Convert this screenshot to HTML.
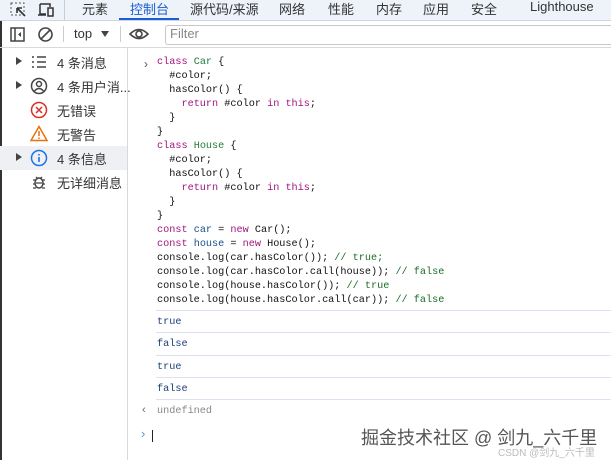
<!DOCTYPE html><html><head><meta charset="utf-8"><style>
body{margin:0;width:611px;height:460px;overflow:hidden;background:#fff;font-family:"Liberation Sans","Noto Sans CJK SC",sans-serif;position:relative}
.a{position:absolute}
.tabs{left:0;top:0;width:611px;height:20px;background:#eef2f9;border-bottom:1px solid #d0d4dc;font-size:13px;color:#333}
.tabs span{position:absolute;top:-1px}
.tb{left:0;top:21px;width:611px;height:26px;border-bottom:1px solid #d6d9e0;font-size:13px;color:#333}
.side{left:0;top:48px;width:127px;height:412px;border-right:1px solid #d6d9e0}
.row{position:absolute;left:0;width:127px;height:24px;font-size:13px;color:#333}
.row .t{position:absolute;left:57px;top:3px;white-space:nowrap}
.row .ar{position:absolute;left:16px;top:7px;width:0;height:0;border-left:6px solid #444;border-top:4px solid transparent;border-bottom:4px solid transparent}
.code{left:157px;top:56px;font-family:"Liberation Mono",monospace;font-size:10.2px;line-height:14px;white-space:pre;color:#111}
.k{color:#a0157f}.c{color:#1a6e2a}.v{color:#1a4f8a}.g{color:#237a3c}
.out{position:absolute;left:157px;font-family:"Liberation Mono",monospace;font-size:10.2px;color:#1a3f7a}
.sep{position:absolute;left:156px;width:455px;height:1px;background:#dde0f0}
</style></head><body>
<div class="a" style="left:0;top:0;width:2px;height:460px;background:#333"></div>
<div class="a tabs">
<svg class="a" style="left:10px;top:2px" width="18" height="16"><rect x="1" y="1" width="13" height="12" fill="none" stroke="#555" stroke-dasharray="2 2"/><path d="M7 6l8 8M7 6h5M7 6v5" stroke="#333" stroke-width="1.6" fill="none"/></svg>
<svg class="a" style="left:37px;top:2px" width="18" height="16"><path d="M3 2h10v3M3 2v10h6" fill="none" stroke="#333" stroke-width="1.5"/><rect x="11" y="6" width="5" height="8" fill="none" stroke="#333" stroke-width="1.5"/><path d="M1 13h8" stroke="#333" stroke-width="1.5"/></svg>
<div class="a" style="left:64px;top:0;width:1px;height:20px;background:#ccc"></div>
<span style="left:82px">元素</span>
<span style="left:130px;color:#1a5fd0">控制台</span>
<div class="a" style="left:119px;top:18px;width:60px;height:2px;background:#1a5fd0"></div>
<span style="left:190px">源代码/来源</span>
<span style="left:279px">网络</span>
<span style="left:328px">性能</span>
<span style="left:376px">内存</span>
<span style="left:423px">应用</span>
<span style="left:471px">安全</span>
<span style="left:530px;top:-1px">Lighthouse</span>
</div>
<div class="a tb">
<svg class="a" style="left:10px;top:6px" width="16" height="16"><rect x="1" y="1" width="13" height="13" fill="none" stroke="#444" stroke-width="1.5"/><path d="M5 1v13" stroke="#444" stroke-width="1.5"/><path d="M11 5l-3 2.5 3 2.5z" fill="#444"/></svg>
<svg class="a" style="left:37px;top:5px" width="17" height="17"><circle cx="8.5" cy="8.5" r="6.5" fill="none" stroke="#444" stroke-width="1.6"/><path d="M4 13L13 4" stroke="#444" stroke-width="1.6"/></svg>
<div class="a" style="left:63px;top:5px;width:1px;height:16px;background:#ccc"></div>
<span class="a" style="left:74px;top:5px">top</span>
<div class="a" style="left:101px;top:10px;border-top:6px solid #444;border-left:4px solid transparent;border-right:4px solid transparent"></div>
<div class="a" style="left:120px;top:5px;width:1px;height:16px;background:#ccc"></div>
<svg class="a" style="left:129px;top:6px" width="20" height="14"><path d="M1 7Q10 -2 19 7Q10 16 1 7z" fill="none" stroke="#444" stroke-width="1.6"/><circle cx="10" cy="7" r="3" fill="none" stroke="#444" stroke-width="1.6"/></svg>
<div class="a" style="left:165px;top:4px;width:446px;height:18px;border:1px solid #c8c8c8;border-right:none;border-radius:3px 0 0 3px"></div>
<span class="a" style="left:170px;top:5px;color:#888">Filter</span>
</div>
<div class="a side">
<div class="row" style="top:2px"><div class="ar"></div><svg class="a" style="left:31px;top:5px" width="16" height="14"><path d="M1 2h2M6 2h9M1 7h2M6 7h9M1 12h2M6 12h9" stroke="#444" stroke-width="1.6"/></svg><span class="t">4 条消息</span></div>
<div class="row" style="top:26px"><div class="ar"></div><svg class="a" style="left:30px;top:3px" width="18" height="18"><circle cx="9" cy="9" r="7.5" fill="none" stroke="#444" stroke-width="1.5"/><circle cx="9" cy="7" r="2.5" fill="none" stroke="#444" stroke-width="1.5"/><path d="M4.5 14q4.5-5 9 0" fill="none" stroke="#444" stroke-width="1.5"/></svg><span class="t">4 条用户消...</span></div>
<div class="row" style="top:50px"><svg class="a" style="left:30px;top:3px" width="18" height="18"><circle cx="9" cy="9" r="7.5" fill="none" stroke="#d93025" stroke-width="1.5"/><path d="M6 6l6 6M12 6l-6 6" stroke="#d93025" stroke-width="1.5"/></svg><span class="t">无错误</span></div>
<div class="row" style="top:74px"><svg class="a" style="left:30px;top:3px" width="18" height="17"><path d="M9 1.5L17 15.5H1z" fill="none" stroke="#e8710a" stroke-width="1.5"/><path d="M9 6v5M9 12.5v1.5" stroke="#e8710a" stroke-width="1.5"/></svg><span class="t">无警告</span></div>
<div class="row" style="top:98px;background:#eef0f4"><div class="ar"></div><svg class="a" style="left:30px;top:3px" width="18" height="18"><circle cx="9" cy="9" r="7.5" fill="none" stroke="#1a73e8" stroke-width="1.5"/><path d="M9 8v5M9 5v1.5" stroke="#1a73e8" stroke-width="1.6"/></svg><span class="t">4 条信息</span></div>
<div class="row" style="top:122px"><svg class="a" style="left:32px;top:4px" width="14" height="16"><ellipse cx="7" cy="9" rx="4" ry="5" fill="none" stroke="#444" stroke-width="1.5"/><path d="M1 6h3M10 6h3M1 10h2M11 10h2M1 14h3M10 14h3M4 3l2 2M10 3l-2 2M4 9h6" stroke="#444" stroke-width="1.3"/></svg><span class="t">无详细消息</span></div>
</div>
<div class="a" style="left:144px;top:57px;font-size:12px;color:#555">&#8250;</div>
<div class="a code"><span class="k">class</span> <span class="g">Car</span> {
  #color;
  hasColor() {
    <span class="k">return</span> #color <span class="k">in</span> <span class="k">this</span>;
  }
}
<span class="k">class</span> <span class="g">House</span> {
  #color;
  hasColor() {
    <span class="k">return</span> #color <span class="k">in</span> <span class="k">this</span>;
  }
}
<span class="k">const</span> <span class="v">car</span> = <span class="k">new</span> Car();
<span class="k">const</span> <span class="v">house</span> = <span class="k">new</span> House();
console.log(car.hasColor()); <span class="c">// true;</span>
console.log(car.hasColor.call(house)); <span class="c">// false</span>
console.log(house.hasColor()); <span class="c">// true</span>
console.log(house.hasColor.call(car)); <span class="c">// false</span></div>
<div class="sep" style="top:310px"></div>
<div class="out" style="top:317px">true</div>
<div class="sep" style="top:332px"></div>
<div class="out" style="top:339px">false</div>
<div class="sep" style="top:355px"></div>
<div class="out" style="top:362px">true</div>
<div class="sep" style="top:377px"></div>
<div class="out" style="top:384px">false</div>
<div class="sep" style="top:399px"></div>
<div class="a" style="left:142px;top:404px;font-size:11px;color:#666">&#8249;</div>
<div class="out" style="top:406px;color:#888">undefined</div>
<div class="a" style="left:141px;top:426px;font-size:13px;color:#6a8fd8">&#8250;</div>
<div class="a" style="left:152px;top:430px;width:1px;height:12px;background:#222"></div>
<div class="a" style="left:361px;top:424px;font-size:18px;color:#555;white-space:nowrap">掘金技术社区 @ 剑九_六千里</div>
<div class="a" style="left:498px;top:444px;font-size:10px;color:#bbb;white-space:nowrap">CSDN @剑九_六千里</div>
</body></html>
